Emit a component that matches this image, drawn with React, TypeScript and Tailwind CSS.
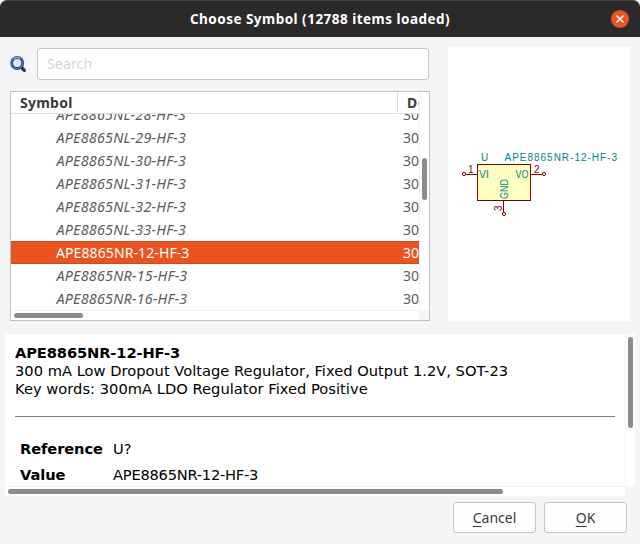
const rows = [
  { name: "APE8865NL-28-HF-3" },
  { name: "APE8865NL-29-HF-3" },
  { name: "APE8865NL-30-HF-3" },
  { name: "APE8865NL-31-HF-3" },
  { name: "APE8865NL-32-HF-3" },
  { name: "APE8865NL-33-HF-3" },
  { name: "APE8865NR-12-HF-3", selected: true },
  { name: "APE8865NR-15-HF-3" },
  { name: "APE8865NR-16-HF-3" },
];

function TitleBar() {
  return (
    <header className="grid h-[37px] shrink-0 grid-cols-[1fr_auto_1fr] items-center rounded-t-[7px] border-t border-[#454343] bg-[#2c292a] px-[11px]">
      <span />
      <h1 className="text-[13.5px] leading-[18px] font-bold tracking-[0.48px] text-white">
        Choose Symbol (12788 items loaded)
      </h1>
      <button className="flex size-[18px] items-center justify-center justify-self-end rounded-full bg-[#e95420]">
        <svg width="18" height="18" viewBox="0 0 18 18" stroke="#fff" strokeWidth="1.4">
          <path d="M5.4 5.4l7.2 7.2M12.6 5.4l-7.2 7.2" />
        </svg>
      </button>
    </header>
  );
}

function SearchIcon() {
  return (
    <svg width="17" height="17" viewBox="0 0 17 17" fill="none">
      <path d="M11.5 11.5l2.900 2.800" stroke="#222" strokeWidth="3.200" strokeLinecap="round" />
      <path d="M12.900 12.700l2 1.800" stroke="#77736b" strokeWidth="1" />
      <circle cx="7.200" cy="7" r="5.500" fill="#e2e3e6" stroke="#2f4391" strokeWidth="3" />
      <circle cx="7.200" cy="7" r="5.600" stroke="#5271bd" strokeWidth="1.200" />
      <path d="M3.400 3.200A5.400 5.400 0 0 1 10.200 2.500" stroke="#91b1df" strokeWidth="1.200" />
      <path d="M5 8.500V6l2-1.500" stroke="#fff" strokeWidth="1.200" />
    </svg>
  );
}

function SymbolList() {
  return (
    <div className="flex h-[230px] flex-col border border-[#bcc1ca] bg-white">
      <div className="flex h-[218px] shrink-0">
        <div className="w-[408px] overflow-hidden">
          <div className="flex h-[22px] border-b border-[#dedfe0] text-[14px] leading-[21px] font-bold tracking-[0.25px] text-[#3a3a3c]">
            <div className="w-[387px] shrink-0 border-r border-[#dcdddf] pl-[9px]">Symbol</div>
            <div className="overflow-hidden pl-[9px] tracking-[0.8px] whitespace-nowrap">Description</div>
          </div>
          <div className="h-[196px] overflow-hidden">
            <div className="-mt-[11px]">
              {rows.map((r) => (
                <div
                  key={r.name}
                  className={
                    "flex h-[23px] text-[14px] " +
                    (r.selected
                      ? "border-y border-[#c94a1f] bg-[#e95420] leading-[21px] text-white"
                      : "leading-[23px] text-[#5a5a5c]")
                  }
                >
                  <span
                    className={
                      "w-[392px] shrink-0 whitespace-nowrap " +
                      (r.selected ? "pl-[45px] tracking-[0.1px]" : "pl-[45.5px] text-[14.3px] tracking-[0.24px] italic")
                    }
                  >
                    {r.name}
                  </span>
                  <span className="whitespace-nowrap">300</span>
                </div>
              ))}
            </div>
          </div>
        </div>
        <div className="w-[10px] border-l border-[#f1f2f3] pt-[66px] pl-[2px]">
          <div className="h-[42px] w-[5px] rounded-full bg-[#8b8b8b]" />
        </div>
      </div>
      <div className="flex h-[10px]">
        <div className="w-[408px] border-t border-[#f1f2f3] pt-[2px] pl-[3px]">
          <div className="h-[5px] w-[69px] rounded-full bg-[#8b8b8b]" />
        </div>
        <div className="w-[10px] bg-[#f4f5f7]" />
      </div>
    </div>
  );
}

function SymbolPreview() {
  return (
    <div className="h-[274px] w-[182px] bg-white">
      <svg width="182" height="274" viewBox="448 47 182 274" fill="none" fontFamily="'Liberation Sans', sans-serif">
        <g shapeRendering="crispEdges" stroke="#840000">
          <rect x="477.5" y="164.5" width="53" height="36" fill="#ffffc2" />
          <path d="M466 174.5h11M531 174.5h11M503.5 201v11" />
        </g>
        <g stroke="#840000">
          <circle cx="464" cy="174" r="1.6" />
          <circle cx="544" cy="174" r="1.6" />
          <circle cx="504" cy="214" r="1.6" />
        </g>
        <g fill="#008484" fontSize="10">
          <text x="481" y="161">U</text>
          <text x="504.5" y="161" textLength="112.5">APE8865NR-12-HF-3</text>
          <text x="479" y="178" fontSize="10.5">VI</text>
          <text x="515.5" y="178" fontSize="10.5" textLength="13" lengthAdjust="spacingAndGlyphs">VO</text>
          <text transform="translate(508 199) rotate(-90)" fontSize="10.5" textLength="20" lengthAdjust="spacingAndGlyphs">GND</text>
        </g>
        <g fill="#840000" fontSize="10">
          <text x="468" y="173">1</text>
          <text x="534" y="173">2</text>
          <text transform="translate(502 211) rotate(-90)">3</text>
        </g>
      </svg>
    </div>
  );
}

function Details() {
  return (
    <section className="mx-[5px] mt-[13px] h-[162px] shrink-0 font-['DejaVu_Sans',sans-serif] text-[14.67px] leading-[18px] text-black">
      <div className="flex h-[152px]">
        <div className="w-[620px] overflow-hidden bg-white px-[10px] pt-[10px]">
          <p className="font-bold tracking-[-0.12px]">APE8865NR-12-HF-3</p>
          <p className="tracking-[0.015px]">300 mA Low Dropout Voltage Regulator, Fixed Output 1.2V, SOT-23</p>
          <p className="tracking-[0.02px]">Key words: 300mA LDO Regulator Fixed Positive</p>
          <hr className="mt-[18px] border-[#808080]" />
          <dl className="mt-[23px] grid grid-cols-[93px_1fr] gap-y-[8px] pl-[5px]">
            <dt className="font-bold tracking-[-0.1px]">Reference</dt>
            <dd>U?</dd>
            <dt className="font-bold tracking-[-0.1px]">Value</dt>
            <dd className="tracking-[-0.24px]">APE8865NR-12-HF-3</dd>
          </dl>
        </div>
        <div className="w-[10px] border-l border-[#f1f2f3] bg-white pt-[3px] pl-[2px]">
          <div className="h-[91px] w-[5px] rounded-full bg-[#8b8b8b]" />
        </div>
      </div>
      <div className="h-[10px] w-[620px] border-t border-[#f1f2f3] bg-white pt-[2px] pl-[3px]">
        <div className="h-[5px] w-[495px] rounded-full bg-[#8b8b8b]" />
      </div>
    </section>
  );
}

function DialogButton({ mnemonic, rest }: { mnemonic: string; rest: string }) {
  return (
    <button className="h-[31px] w-[83px] rounded-[3px] border border-[#c0c5ce] bg-[#fdfdfe] text-[14px] leading-[29px] text-[#3a3a3c]">
      <span className="underline decoration-1 underline-offset-[3px]">{mnemonic}</span>
      {rest}
    </button>
  );
}

export default function App() {
  return (
    <div className="h-[544px] w-[640px] overflow-hidden bg-white font-['Noto_Sans',sans-serif]">
      <main className="flex h-full flex-col rounded-t-[7px] bg-[#f4f5f7]">
        <TitleBar />
        <div className="flex gap-[18px] pt-[10px] pl-[10px]">
          <div className="w-[420px]">
            <div className="flex h-[44px] items-start pt-px">
              <div className="w-[27px] pt-[8px]">
                <SearchIcon />
              </div>
              <input
                className="h-[32px] w-[392px] rounded-[3px] border border-[#c2c6ce] bg-white px-[9px] pb-[2px] text-[14px] tracking-[0.15px] text-[#3a3a3c] outline-none placeholder:text-[#d5d5d6]"
                placeholder="Search"
              />
            </div>
            <SymbolList />
          </div>
          <SymbolPreview />
        </div>
        <Details />
        <footer className="flex justify-end gap-[8px] pt-[6px] pr-[13px]">
          <DialogButton mnemonic="C" rest="ancel" />
          <DialogButton mnemonic="O" rest="K" />
        </footer>
      </main>
    </div>
  );
}
